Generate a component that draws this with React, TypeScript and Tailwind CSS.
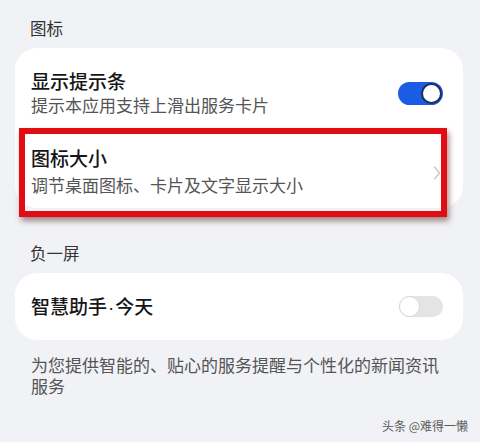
export default function App() {
  return (
    <div
      className="w-[480px] h-[442px] bg-[#f1f2f6] overflow-hidden pl-[15px] pr-[17px]"
      style={{ fontFamily: '"Noto Sans CJK SC", "Noto Sans", sans-serif' }}
    >
      {/* 图标 */}
      <div className="pt-[18px] pl-[15px] text-[16.5px] leading-[20px] text-[#333]">图标</div>

      <div className="relative mt-[10px] bg-white rounded-[22px]">
        <div className="flex items-center pl-[16px] pr-[20px] pt-[20px] pb-[14px]">
          <div className="flex-1">
            <div className="text-[19px] leading-[26px] font-medium text-[#161616]">显示提示条</div>
            <div className="text-[17px] leading-[22px] text-[#555]">提示本应用支持上滑出服务卡片</div>
          </div>
          <div className="mt-[2px] w-[45px] h-[23px] rounded-full bg-[#1b5ce6] flex items-center justify-end pr-[1px]">
            <div className="w-[21px] h-[21px] rounded-full bg-white border-2 border-[#1d2f57]" />
          </div>
        </div>

        <div className="flex items-center pl-[16px] pr-[22px] pt-[15px] pb-[12px]">
          <div className="flex-1">
            <div className="text-[19px] leading-[26px] font-medium text-[#161616]">图标大小</div>
            <div className="mt-[3px] text-[17px] leading-[22px] text-[#555]">调节桌面图标、卡片及文字显示大小</div>
          </div>
          <svg width="8" height="16" viewBox="0 0 8 16" className="mt-[4px]">
            <path d="M1.5 2 L6.5 8 L1.5 14" fill="none" stroke="#c8c8cc" strokeWidth="1.4" strokeLinecap="round" strokeLinejoin="round" />
          </svg>
        </div>

        {/* red highlight frame */}
        <div className="absolute left-[4px] top-[80px] w-[428px] h-[89px] border-[6px] border-[#e10d12] shadow-[2px_4px_6px_rgba(60,0,0,0.45)] pointer-events-none" />
      </div>

      {/* 负一屏 */}
      <div className="mt-[35px] pl-[15px] text-[16.5px] leading-[20px] text-[#333]">负一屏</div>

      <div className="mt-[10px] bg-white rounded-[22px] flex items-center pl-[16px] pr-[20px] h-[67px]">
        <div className="flex-1 text-[19px] leading-[26px] font-medium text-[#161616]">
          智慧助手<span style={{ fontFamily: '"Liberation Sans", sans-serif' }} className="px-[1px]">·</span>今天
        </div>
        <div className="w-[44px] h-[21px] rounded-full bg-[#e4e4e6] flex items-center">
          <div className="w-[21px] h-[21px] rounded-full bg-white border border-[#d6d6d8]" />
        </div>
      </div>

      <div className="mt-[14px] pl-[16px] pr-[20px] text-[17px] leading-[21px] text-[#555]">
        为您提供智能的、贴心的服务提醒与个性化的新闻资讯服务
      </div>

      <div className="mt-[22px] -mr-[5px] flex justify-end text-[12px] leading-[16px] text-[#5a5a5a]">
        头条 @难得一懒
      </div>
    </div>
  )
}
